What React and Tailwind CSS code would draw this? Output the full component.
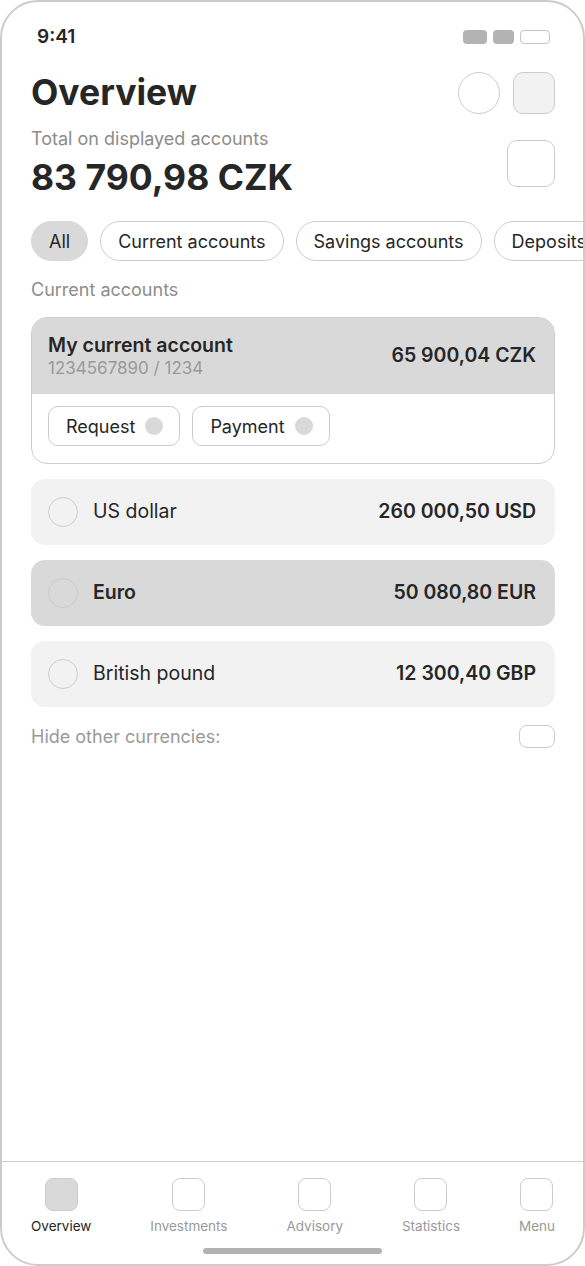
import React from "react";

const font = { fontFamily: "Inter, 'Noto Sans', sans-serif" };

function Chip({ label, active }) {
  return (
    <div
      className={
        "shrink-0 h-[40px] px-[17px] rounded-full flex items-center text-[18px] text-[#262626] " +
        (active ? "bg-[#d9d9d9] border-[1.5px] border-[#d9d9d9]" : "border-[1.5px] border-[#cccccc] bg-white")
      }
    >
      {label}
    </div>
  );
}

function CurrencyRow({ name, amount, selected }) {
  return (
    <div
      className={
        "h-[66px] rounded-[14px] flex items-center pl-[17px] pr-[19px] " +
        (selected ? "bg-[#d9d9d9]" : "bg-[#f2f2f2]")
      }
    >
      <div className="w-[30px] h-[30px] rounded-full border-[1.5px] border-[#cccccc]" />
      <div className={"ml-[15px] text-[19.5px] text-[#262626] " + (selected ? "font-semibold" : "")}>{name}</div>
      <div className="ml-auto text-[19.5px] font-semibold text-[#262626]">{amount}</div>
    </div>
  );
}

function NavItem({ label, active }) {
  return (
    <div className="flex flex-col items-center">
      <div
        className={
          "w-[33px] h-[33px] rounded-[8px] border-[1.5px] border-[#cccccc] " +
          (active ? "bg-[#d9d9d9]" : "bg-white")
        }
      />
      <div className={"mt-[6px] text-[13.5px] leading-[18px] " + (active ? "text-[#262626]" : "text-[#999999]")}>
        {label}
      </div>
    </div>
  );
}

export default function App() {
  return (
    <div style={font} className="w-[585px] h-[1266px] bg-white">
      <div className="w-full h-full border-2 border-[#cccccc] rounded-[38px] overflow-hidden flex flex-col">
        <div className="pl-[29px] pr-[28px] pt-[24px]">
          {/* status bar */}
          <div className="h-[22px] flex items-center justify-between">
            <div className="ml-[6px] text-[19px] font-semibold text-[#262626] leading-[22px]">9:41</div>
            <div className="flex items-center gap-[6px] mr-[5px]">
              <div className="w-[24px] h-[14px] rounded-[4px] bg-[#b3b3b3]" />
              <div className="w-[21px] h-[14px] rounded-[4px] bg-[#b3b3b3]" />
              <div className="w-[30px] h-[14px] rounded-[4px] border-[1.5px] border-[#c4c4c4]" />
            </div>
          </div>

          {/* title */}
          <div className="mt-[24px] h-[42px] flex items-center justify-between">
            <div className="text-[35.5px] font-bold text-[#262626] leading-[42px]">Overview</div>
            <div className="flex items-center gap-[13px]">
              <div className="w-[42px] h-[42px] rounded-full border-[1.5px] border-[#cccccc]" />
              <div className="w-[42px] h-[42px] rounded-[10px] border-[1.5px] border-[#cccccc] bg-[#f2f2f2]" />
            </div>
          </div>

          {/* total */}
          <div className="mt-[14px] flex items-start justify-between">
            <div>
              <div className="text-[18px] leading-[22px] text-[#8c8c8c]">Total on displayed accounts</div>
              <div className="mt-[6px] text-[35.5px] leading-[44px] font-bold text-[#262626]">83 790,98 CZK</div>
            </div>
            <div className="mt-[12px] w-[48px] h-[47px] rounded-[10px] border-[1.5px] border-[#cccccc]" />
          </div>
        </div>

        {/* chips */}
        <div className="mt-[21px] pl-[29px] flex gap-[12px] overflow-hidden">
          <Chip label="All" active />
          <Chip label="Current accounts" />
          <Chip label="Savings accounts" />
          <Chip label="Deposits" />
        </div>

        <div className="pl-[29px] pr-[28px]">
          <div className="mt-[18px] text-[18px] leading-[22px] text-[#8c8c8c]">Current accounts</div>

          {/* account card */}
          <div className="mt-[16px] rounded-[16px] border-[1.5px] border-[#cccccc] overflow-hidden">
            <div className="h-[76px] bg-[#d9d9d9] flex items-center pl-[16px] pr-[18px]">
              <div>
                <div className="text-[19.5px] leading-[25px] font-semibold text-[#262626]">My current account</div>
                <div className="text-[17px] leading-[21px] text-[#999999]">1234567890 / 1234</div>
              </div>
              <div className="ml-auto text-[19.5px] font-semibold text-[#262626]">65 900,04 CZK</div>
            </div>
            <div className="px-[16px] pt-[12px] pb-[17px] flex gap-[12px]">
              <div className="h-[40px] pl-[17px] pr-[16px] rounded-[10px] border-[1.5px] border-[#cccccc] flex items-center gap-[10px]">
                <span className="text-[18px] text-[#262626]">Request</span>
                <span className="w-[18px] h-[18px] rounded-full bg-[#d9d9d9]" />
              </div>
              <div className="h-[40px] pl-[17px] pr-[16px] rounded-[10px] border-[1.5px] border-[#cccccc] flex items-center gap-[10px]">
                <span className="text-[18px] text-[#262626]">Payment</span>
                <span className="w-[18px] h-[18px] rounded-full bg-[#d9d9d9]" />
              </div>
            </div>
          </div>

          {/* currencies */}
          <div className="mt-[15px] flex flex-col gap-[15px]">
            <CurrencyRow name="US dollar" amount="260 000,50 USD" />
            <CurrencyRow name="Euro" amount="50 080,80 EUR" selected />
            <CurrencyRow name="British pound" amount="12 300,40 GBP" />
          </div>

          <div className="mt-[18px] h-[23px] flex items-center justify-between">
            <div className="text-[18px] text-[#999999]">Hide other currencies:</div>
            <div className="w-[36px] h-[23px] rounded-[8px] border-[1.5px] border-[#cccccc]" />
          </div>
        </div>

        {/* bottom nav */}
        <div className="mt-auto border-t-[1.5px] border-[#cccccc] pt-[16px]">
          <div className="flex justify-between pl-[29px] pr-[28px]">
            <NavItem label="Overview" active />
            <NavItem label="Investments" />
            <NavItem label="Advisory" />
            <NavItem label="Statistics" />
            <NavItem label="Menu" />
          </div>
          <div className="mt-[13px] mb-[10px] mx-auto w-[179px] h-[6px] rounded-full bg-[#b3b3b3]" />
        </div>
      </div>
    </div>
  );
}
